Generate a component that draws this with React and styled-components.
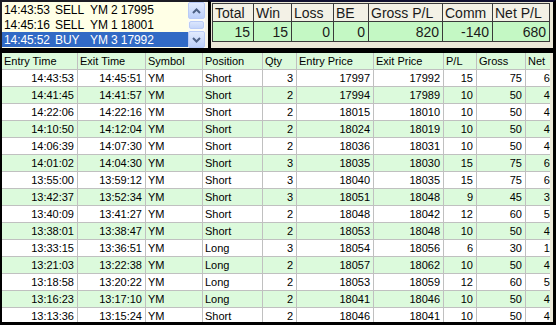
import React from 'react';
import styled, { createGlobalStyle } from 'styled-components';

const GlobalStyle = createGlobalStyle`
  html, body {
    margin: 0;
    padding: 0;
    background: #ece9d8;
  }
  body {
    font-family: "Liberation Sans", Arial, sans-serif;
  }
`;

const orders = [
  { time: '14:43:53', side: 'SELL', rest: 'YM 2 17995' },
  { time: '14:45:16', side: 'SELL', rest: 'YM 1 18001' },
  { time: '14:45:52', side: 'BUY', rest: 'YM 3 17992', selected: true },
];

const stats = [
  { label: 'Total', value: '15', w: 41 },
  { label: 'Win', value: '15', w: 38 },
  { label: 'Loss', value: '0', w: 42 },
  { label: 'BE', value: '0', w: 35 },
  { label: 'Gross P/L', value: '820', w: 74 },
  { label: 'Comm', value: '-140', w: 50 },
  { label: 'Net P/L', value: '680', w: 57 },
];

const columns = [
  { label: 'Entry Time', w: 76, right: true },
  { label: 'Exit Time', w: 68, right: true },
  { label: 'Symbol', w: 57 },
  { label: 'Position', w: 60 },
  { label: 'Qty', w: 34, right: true },
  { label: 'Entry Price', w: 77, right: true },
  { label: 'Exit Price', w: 70, right: true },
  { label: 'P/L', w: 33, right: true },
  { label: 'Gross', w: 49, right: true },
  { label: 'Net', w: 34, right: true },
];

const trades = [
  ['14:43:53', '14:45:51', 'YM', 'Short', '3', '17997', '17992', '15', '75', '60'],
  ['14:41:45', '14:41:57', 'YM', 'Short', '2', '17994', '17989', '10', '50', '40'],
  ['14:22:06', '14:22:16', 'YM', 'Short', '2', '18015', '18010', '10', '50', '40'],
  ['14:10:50', '14:12:04', 'YM', 'Short', '2', '18024', '18019', '10', '50', '40'],
  ['14:06:39', '14:07:30', 'YM', 'Short', '2', '18036', '18031', '10', '50', '40'],
  ['14:01:02', '14:04:30', 'YM', 'Short', '3', '18035', '18030', '15', '75', '60'],
  ['13:55:00', '13:59:12', 'YM', 'Short', '3', '18040', '18035', '15', '75', '60'],
  ['13:42:37', '13:52:34', 'YM', 'Short', '3', '18051', '18048', '9', '45', '30'],
  ['13:40:09', '13:41:27', 'YM', 'Short', '2', '18048', '18042', '12', '60', '50'],
  ['13:38:01', '13:38:47', 'YM', 'Short', '2', '18053', '18048', '10', '50', '40'],
  ['13:33:15', '13:36:51', 'YM', 'Long', '3', '18054', '18056', '6', '30', '15'],
  ['13:21:03', '13:22:38', 'YM', 'Long', '2', '18057', '18062', '10', '50', '40'],
  ['13:18:58', '13:20:22', 'YM', 'Long', '2', '18053', '18059', '12', '60', '50'],
  ['13:16:23', '13:17:10', 'YM', 'Long', '2', '18041', '18046', '10', '50', '40'],
  ['13:13:36', '13:15:24', 'YM', 'Short', '2', '18046', '18041', '10', '50', '40'],
];

function Arrow({ up }) {
  return (
    <svg width="9" height="6" viewBox="0 0 9 6">
      <polyline
        points={up ? '1,5 4.5,1.5 8,5' : '1,1 4.5,4.5 8,1'}
        fill="none"
        stroke="#4d6185"
        strokeWidth="2"
      />
    </svg>
  );
}

export default function App() {
  return (
    <Window>
      <GlobalStyle />
      <TopSection>
        <ListBox>
          <ListRows>
            {orders.map((o) => (
              <ListRow key={o.time} $selected={o.selected}>
                <ListField $w={51}>{o.time}</ListField>
                <ListField $w={35}>{o.side}</ListField>
                <ListField>{o.rest}</ListField>
              </ListRow>
            ))}
          </ListRows>
          <ScrollBar>
            <ScrollButton>
              <Arrow up />
            </ScrollButton>
            <ScrollTrack>
              <ScrollThumb />
            </ScrollTrack>
            <ScrollButton>
              <Arrow />
            </ScrollButton>
          </ScrollBar>
        </ListBox>
        <StatsPanel>
          <StatsTable>
            {stats.map((s) => (
              <StatsCell key={s.label} $w={s.w} $h={18}>
                {s.label}
              </StatsCell>
            ))}
            {stats.map((s) => (
              <StatsCell key={s.label + 'v'} $w={s.w} $h={20} $value>
                {s.value}
              </StatsCell>
            ))}
          </StatsTable>
        </StatsPanel>
      </TopSection>
      <GridFrame>
        <GridViewport>
          <GridRow $alt>
            {columns.map((c) => (
              <GridCell key={c.label} $w={c.w}>
                {c.label}
              </GridCell>
            ))}
          </GridRow>
          {trades.map((t, i) => (
            <GridRow key={t[0]} $alt={i % 2 === 1}>
              {t.map((v, j) => (
                <GridCell key={j} $w={columns[j].w} $right={columns[j].right}>
                  {v}
                </GridCell>
              ))}
            </GridRow>
          ))}
        </GridViewport>
        <GridGap />
      </GridFrame>
    </Window>
  );
}

const Window = styled.div`
  width: 556px;
  height: 325px;
  display: flex;
  flex-direction: column;
  background: #ece9d8;
  overflow: hidden;
`;

const TopSection = styled.div`
  display: flex;
  height: 48px;
  flex-shrink: 0;
`;

const ListBox = styled.div`
  width: 208px;
  box-sizing: border-box;
  display: flex;
  border-top: 2px solid #1c1c24;
  border-left: 2px solid #1c1c24;
  padding-right: 3px;
  background: #f6f4ea;
`;

const ListRows = styled.div`
  width: 186px;
  display: flex;
  flex-direction: column;
  background: #ffffe6;
`;

const ListRow = styled.div`
  height: 15px;
  display: flex;
  align-items: center;
  padding-left: 2px;
  font-size: 12px;
  letter-spacing: -0.1px;
  background: ${(p) => (p.$selected ? '#316ac5' : 'transparent')};
  color: ${(p) => (p.$selected ? '#ffffff' : '#000000')};
`;

const ListField = styled.span`
  flex-shrink: 0;
  white-space: pre;
  width: ${(p) => (p.$w ? `${p.$w}px` : 'auto')};
`;

const ScrollBar = styled.div`
  width: 17px;
  display: flex;
  flex-direction: column;
  background: #fbfbf6;
`;

const ScrollButton = styled.div`
  height: 17px;
  box-sizing: border-box;
  display: flex;
  align-items: center;
  justify-content: center;
  border: 1px solid #b9cbf7;
  border-radius: 2px;
  background: linear-gradient(#e2ebfe, #bccff9);
`;

const ScrollTrack = styled.div`
  flex: 1;
  display: flex;
  align-items: center;
  padding: 0 1px;
`;

const ScrollThumb = styled.div`
  flex: 1;
  height: 8px;
  box-sizing: border-box;
  border: 1px solid #b9cbf7;
  border-radius: 2px;
  background: linear-gradient(#dbe6fd, #c4d5fa);
`;

const StatsPanel = styled.div`
  flex: 1;
  box-sizing: border-box;
  border-left: 3px solid #000000;
  border-top: 2px solid #101030;
  border-right: 3px solid #000000;
  padding: 1px 0 0 1px;
`;

const StatsTable = styled.div`
  display: flex;
  flex-wrap: wrap;
  width: 338px;
  box-sizing: border-box;
  border-left: 1px solid #3a3a3a;
  border-top: 1px solid #3a3a3a;
`;

const StatsCell = styled.div`
  width: ${(p) => p.$w}px;
  height: ${(p) => p.$h}px;
  box-sizing: border-box;
  display: flex;
  align-items: center;
  justify-content: ${(p) => (p.$value ? 'flex-end' : 'flex-start')};
  padding: 0 3px 0 2px;
  border-right: 1px solid #3a3a3a;
  border-bottom: 1px solid #3a3a3a;
  font-size: 14px;
  color: #1a1a1a;
  background: ${(p) => (p.$value ? '#c4f8c4' : '#f3f1e6')};
`;

const GridFrame = styled.div`
  flex: 1;
  min-height: 0;
  display: flex;
  border-top: 5px solid #000000;
  border-left: 2px solid #000000;
  border-right: 3px solid #000000;
  border-bottom: 3px solid #000000;
`;

const GridViewport = styled.div`
  width: 548px;
  overflow: hidden;
  background: #ffffff;
`;

const GridGap = styled.div`
  flex: 1;
  background: #ece9d8;
`;

const GridRow = styled.div`
  display: flex;
  height: 17px;
  background: ${(p) => (p.$alt ? '#dcfadc' : '#ffffff')};
`;

const GridCell = styled.div`
  width: ${(p) => p.$w}px;
  flex-shrink: 0;
  box-sizing: border-box;
  padding: 0 3px 0 2px;
  border-right: 1px solid #c0c0c0;
  border-bottom: 1px solid #c0c0c0;
  font-size: 11px;
  line-height: 16px;
  white-space: nowrap;
  overflow: hidden;
  text-align: ${(p) => (p.$right ? 'right' : 'left')};
  color: #000000;
`;
